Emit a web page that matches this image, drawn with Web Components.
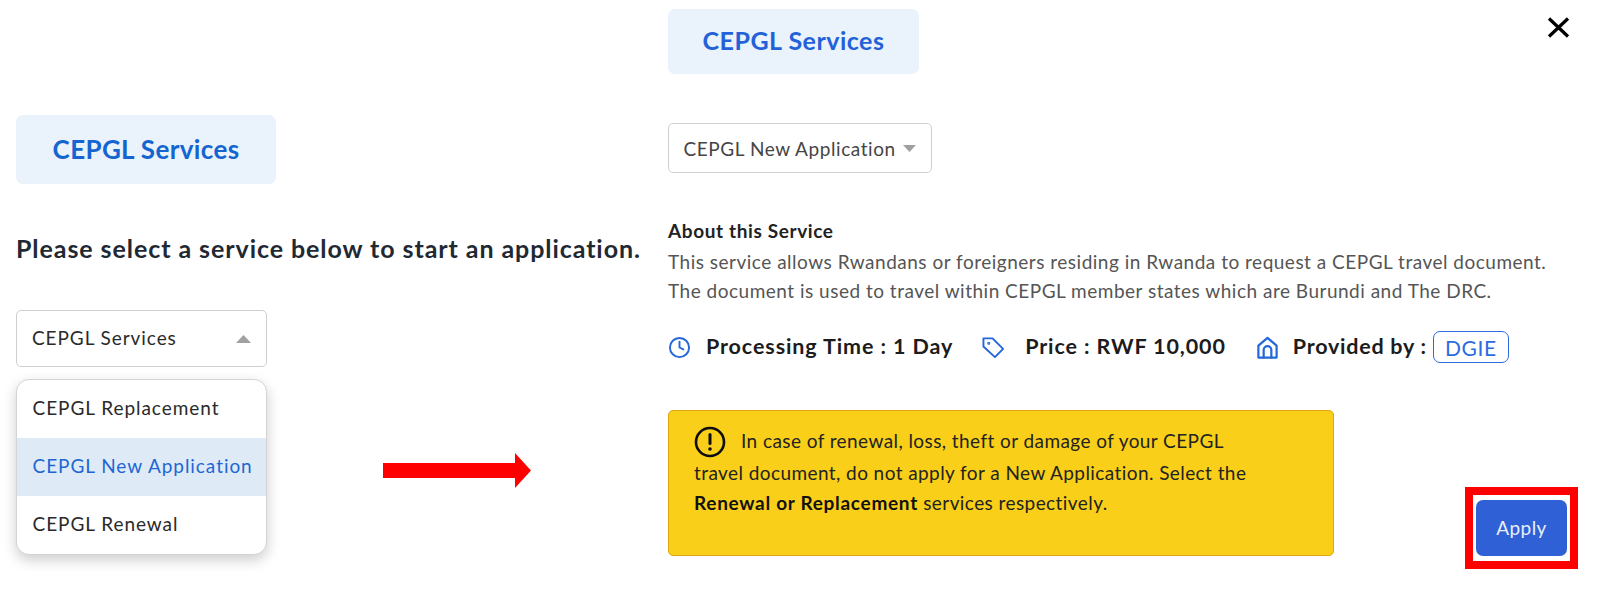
<!DOCTYPE html>
<html lang="en"><head><meta charset="utf-8"><title>CEPGL Services</title>
<style>
html,body{margin:0;padding:0;background:#fff}
body{width:1600px;height:610px;overflow:hidden;font-family:"Lato","Noto Sans",sans-serif}
</style></head><body>
<service-page></service-page>
<script>
const F='"Lato","Noto Sans",sans-serif';
function def(name,css,html){
  customElements.define(name,class extends HTMLElement{
    constructor(){super();const r=this.attachShadow({mode:'open'});
      r.innerHTML=`<style>${css}</style>${typeof html==='function'?html(this):html}`;}
  });
}
def('service-chip',`:host{display:flex;align-items:center;justify-content:center;box-sizing:border-box;background:#eaf2fc;border-radius:7px;font:700 var(--fs,25px)/1 ${F};color:var(--c,#1565d0);letter-spacing:var(--ls,.5px);width:var(--w,260px);height:var(--h,69px);padding-bottom:2px}`,`<slot></slot>`);
def('select-box',`:host{display:flex;align-items:center;box-sizing:border-box;background:#fff;border:1.5px solid #cfcfcf;border-radius:5px;font:400 19px/1 ${F};letter-spacing:var(--ls,.57px);color:var(--c,#333);width:var(--w);height:var(--h);padding:0 var(--pr,14px) var(--pb,0) var(--pl,14.5px);justify-content:space-between}
svg{display:block;flex:none;margin-top:var(--cm,0)}`,e=>`<slot></slot><svg width="${e.hasAttribute('open')?15:13}" height="${e.hasAttribute('open')?8:7}" viewBox="0 0 15 8" preserveAspectRatio="none"><path fill="#a0a0a0" d="${e.hasAttribute('open')?'M7.5 0L15 8H0z':'M0 0H15L7.5 8z'}"/></svg>`);
def('menu-list',`:host{display:block;box-sizing:border-box;width:251px;background:#fff;border:1.5px solid #d4d4d4;border-radius:13px;overflow:hidden;box-shadow:0 5px 14px rgba(0,0,0,.2)}`,`<slot></slot>`);
def('menu-item',`:host{display:flex;align-items:center;box-sizing:border-box;height:58px;padding:0 0 3px 15.5px;font:400 19px/1 ${F};letter-spacing:.95px;color:#2a2a2a;white-space:nowrap}
:host([active]){background:#deebf7;color:#1f66d3}`,`<slot></slot>`);
def('meta-item',`:host{display:flex;align-items:center;font:700 21.5px/1 ${F};letter-spacing:var(--ls,.89px);color:#1c1c1c;white-space:nowrap;gap:var(--g,15px)}
::slotted(svg){display:block;flex:none}`,`<slot></slot>`);
def('pill-tag',`:host{display:inline-flex;align-items:center;justify-content:center;box-sizing:border-box;width:76px;height:32px;border:1.5px solid #2d6be0;border-radius:7px;color:#2d6be0;font:400 21px/1 ${F};letter-spacing:.6px}`,`<slot></slot>`);
def('notice-box',`:host{display:block;box-sizing:border-box;width:666px;height:146px;background:#f9cf19;border:1.5px solid #dea710;border-radius:5px;padding:14.5px 25px 0;font:400 19px/30.5px ${F};letter-spacing:.42px;color:#222}
.l{display:flex;align-items:center;height:32px;white-space:nowrap}
.l svg{flex:none;margin-right:15px}
.t{white-space:nowrap;height:30.5px}
b{font-weight:700;color:#111;letter-spacing:.7px}`,
`<div class="l"><svg width="32" height="32" viewBox="0 0 32 32" fill="none"><circle cx="16" cy="16" r="14" stroke="#0d0d0d" stroke-width="2.6"/><path d="M16 8.5v9" stroke="#0d0d0d" stroke-width="3" stroke-linecap="round"/><circle cx="16" cy="23" r="1.8" fill="#0d0d0d"/></svg><span>In case of renewal, loss, theft or damage of your CEPGL</span></div>
<div class="t">travel document, do not apply for a New Application. Select the</div>
<div class="t"><b>Renewal or Replacement</b> services respectively.</div>`);
def('apply-frame',`:host{display:flex;align-items:center;justify-content:center;box-sizing:border-box;width:113px;height:82px;border:8px solid #f00;background:#fff}
button{all:unset;display:flex;align-items:center;justify-content:center;width:91px;height:56px;margin-bottom:1px;border-radius:7px;background:#2f60d6;color:#e9effc;font:400 19px/1 ${F};letter-spacing:.45px}`,`<button>Apply</button>`);
def('red-arrow',`:host{position:absolute;left:383px;top:453px;display:block;line-height:0}`,`<svg width="148" height="35" viewBox="0 0 148 35"><path fill="#f00" d="M0 10H132V0L148 17.500L132 35V25H0z"/></svg>`);
def('close-x',`:host{position:absolute;left:1547px;top:17px;display:block;line-height:0}`,`<svg width="23" height="21" viewBox="0 0 23 21"><path d="M2 1.500L21 19.500M21 1.500L2 19.500" stroke="#000" stroke-width="3.200"/></svg>`);
const ICON=(inner,w=23,h=23,sw=2)=>`<svg width="${w}" height="${h}" viewBox="0 0 24 24" fill="none" stroke="#2467d8" stroke-width="${sw}" stroke-linecap="round" stroke-linejoin="round">${inner}</svg>`;
def('service-page',`:host{display:grid;grid-template-columns:668px 1fr;width:1600px;height:610px;position:relative;font-family:${F}}
.left{padding:115px 0 0 16px}
.right{padding:9px 0 0 0}
h2{margin:47px 0 0;font:700 25px/34px ${F};letter-spacing:.93px;color:#1f2933;white-space:nowrap}
.lsel{margin-top:45px}
menu-list{margin:12px 0 0 0}
.rsel{margin-top:49px}
.about{margin:46px 0 0;font:700 19px/24px ${F};letter-spacing:.62px;color:#222}
p{margin:4px 0 0;font:400 19px/29px ${F};letter-spacing:.5px;color:#555;white-space:nowrap}
.meta{display:flex;align-items:center;margin-top:26px;height:32px}
.bottom{display:flex;align-items:flex-end;margin-top:47px}
apply-frame{margin-left:131px;margin-bottom:-13px}`,
`<section class="left">
<service-chip style="--fs:26px;--ls:.35px">CEPGL Services</service-chip>
<h2>Please select a service below to start an application.</h2>
<select-box class="lsel" open style="--w:251px;--h:57px;--pr:15px;--pb:2px;--pl:15px;--c:#2a2a2a;--ls:.93px;--cm:2px">CEPGL Services</select-box>
<menu-list><menu-item>CEPGL Replacement</menu-item><menu-item active>CEPGL New Application</menu-item><menu-item>CEPGL Renewal</menu-item></menu-list>
</section>
<section class="right">
<service-chip style="--w:251px;--h:65px;--c:#2361d8">CEPGL Services</service-chip>
<select-box class="rsel" style="--w:264px;--h:50px;--pr:15px;--c:#454545">CEPGL New Application</select-box>
<div class="about">About this Service</div>
<p>This service allows Rwandans or foreigners residing in Rwanda to request a CEPGL travel document.<br>The document is used to travel within CEPGL member states which are Burundi and The DRC.</p>
<div class="meta">
<meta-item style="margin-right:29px">${ICON('<circle cx="12" cy="12" r="10"/><path d="M12 6v6l4 2"/>')}<span>Processing Time : 1 Day</span></meta-item>
<meta-item style="--g:20px;margin-right:30px">${ICON('<path d="M1.500 2.500h9.500l11 11-8.500 8.500L1.500 11z"/><circle cx="7" cy="7.500" r=".6"/>')}<span>Price : RWF 10,000</span></meta-item>
<meta-item style="--g:14px;--ls:.75px;margin-right:6px">${ICON('<path d="M2.500 10L12 2l9.500 8v12.500H2.500z"/><path d="M8 22.500v-8a4 4 0 0 1 8 0v8"/>',23,25,2.300)}<span>Provided by :</span></meta-item>
<pill-tag>DGIE</pill-tag>
</div>
<div class="bottom"><notice-box></notice-box><apply-frame></apply-frame></div>
</section>
<red-arrow></red-arrow><close-x></close-x>`);
</script>
</body></html>
